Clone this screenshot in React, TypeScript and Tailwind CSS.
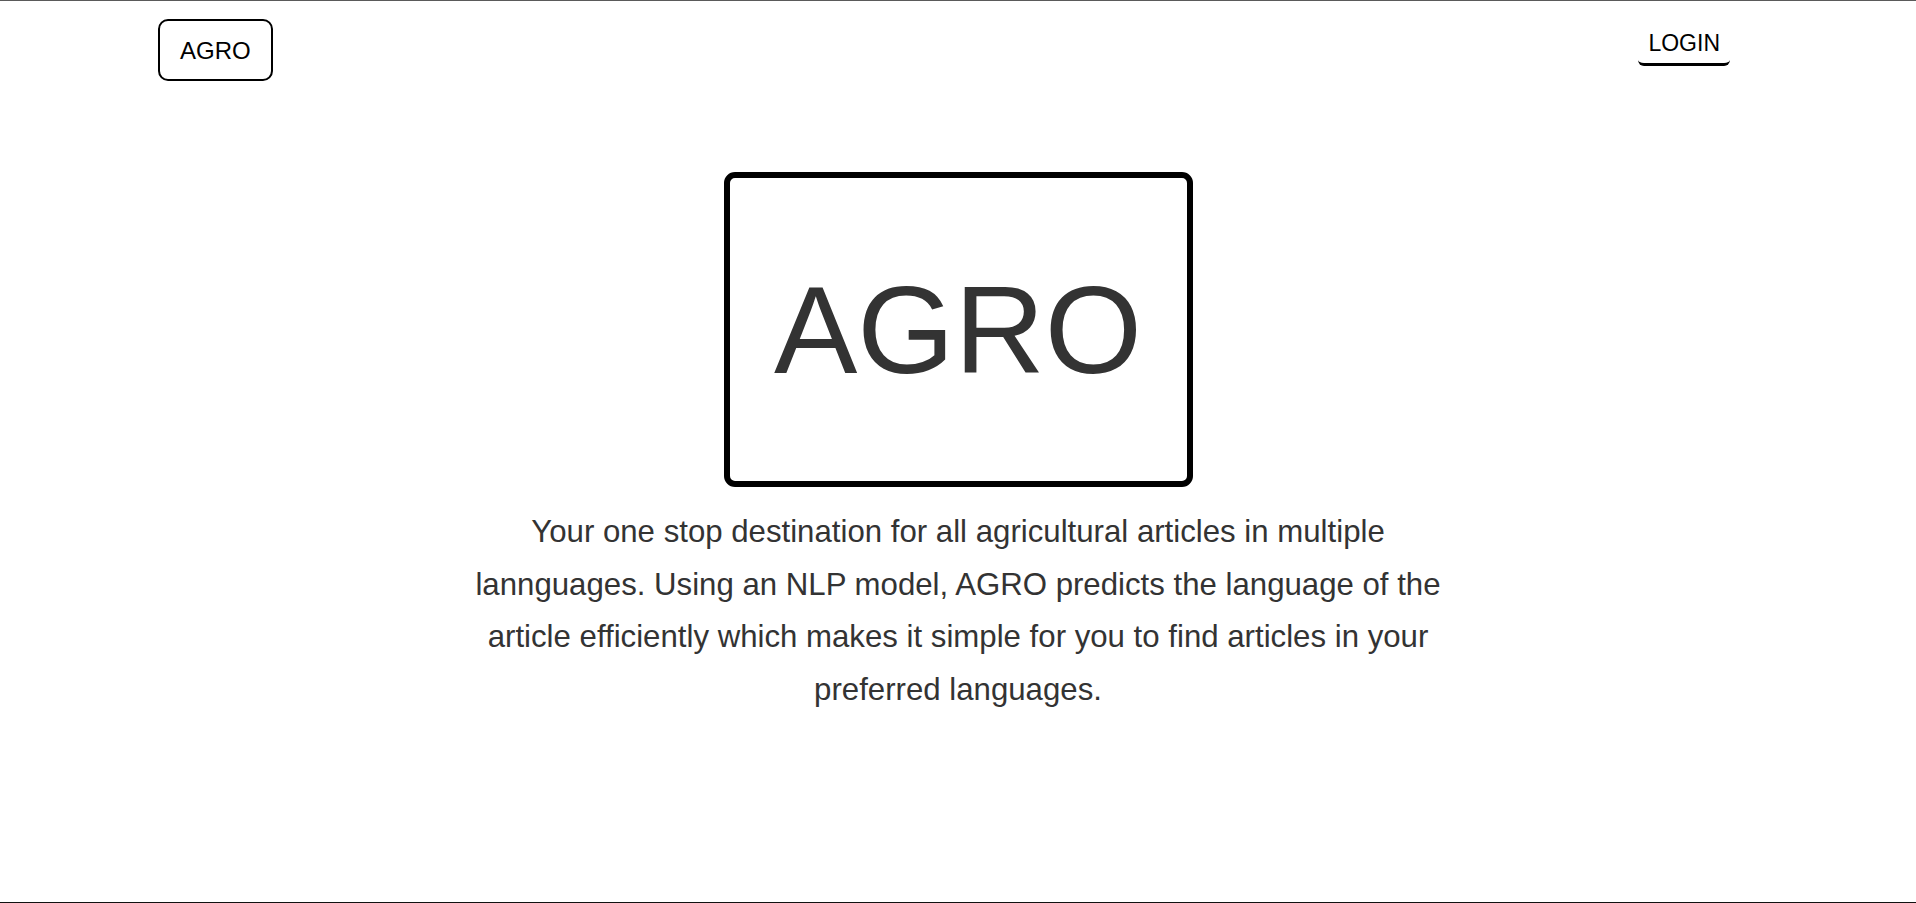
export default function App() {
  return (
    <div className="h-screen w-full bg-white border-t border-[#5a5a5a] border-b border-b-[#111] font-['Liberation_Sans',Arial,sans-serif] flex flex-col">
      <header className="flex justify-between items-start pl-[158px] pr-[186px] pt-[18px]">
        <div className="border-2 border-black rounded-[10px] px-5 pt-[16px] pb-[14px] text-2xl text-black leading-[28px]">
          AGRO
        </div>
        <button className="mt-[6px] px-[10px] pt-[5px] pb-[7px] border-b-[3px] border-black rounded-b-[6px] text-[23px] leading-[26px] text-black">
          LOGIN
        </button>
      </header>

      <main className="flex flex-col items-center">
        <div className="mt-[91px] w-[469px] h-[315px] border-[6px] border-black rounded-[11px] flex items-center justify-center">
          <span className="text-[125px] leading-none text-[#333]">AGRO</span>
        </div>
        <p className="mt-[19px] w-[995px] text-center text-[31.2px] leading-[52.6px] text-[#333]">
          Your one stop destination for all agricultural articles in multiple lannguages. Using an NLP model, AGRO
          predicts the language of the article efficiently which makes it simple for you to find articles in your
          preferred languages.
        </p>
      </main>
    </div>
  );
}
